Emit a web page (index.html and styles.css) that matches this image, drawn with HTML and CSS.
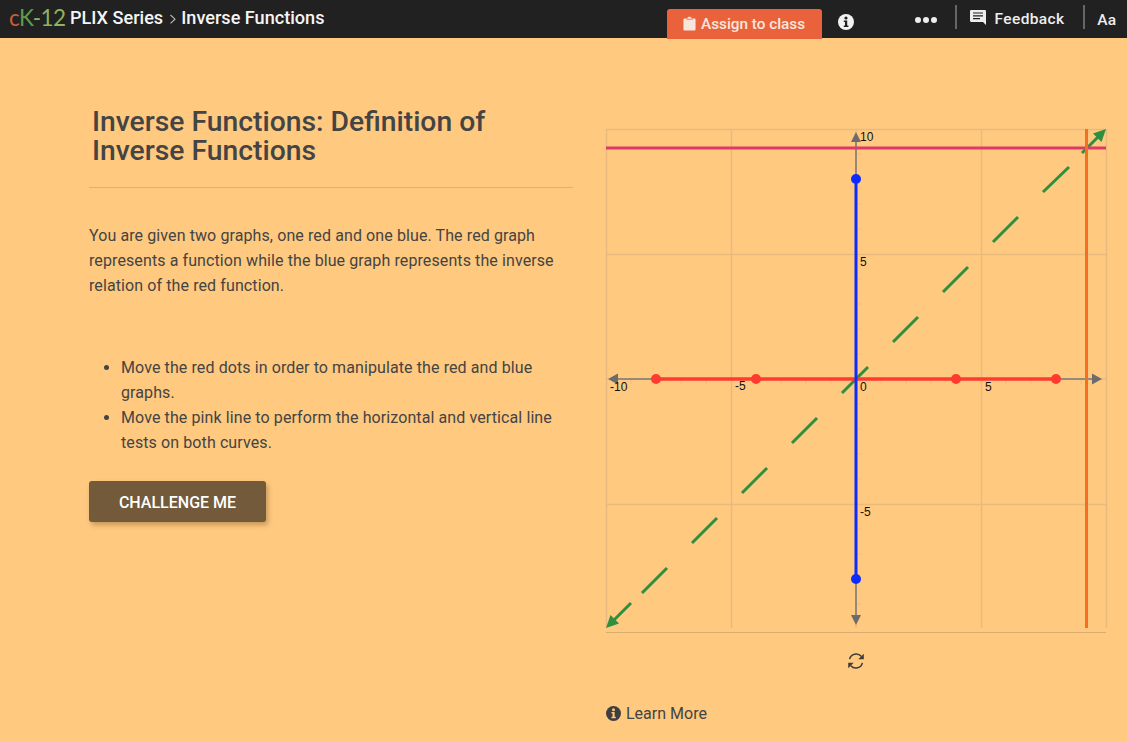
FILE: index.html
```html
<!DOCTYPE html>
<html lang="en">
<head>
<meta charset="utf-8">
<title>Inverse Functions</title>
<link rel="stylesheet" href="styles.css">
</head>
<body>
<header class="topbar">
  <div class="brand">
    <span class="logo"><span class="logo-c">c</span><span class="logo-k">K</span><span class="logo-n">-12</span></span>
    <span class="crumb">PLIX Series</span>
    <svg class="chev" width="8" height="12" viewBox="0 0 8 12"><path d="M1.500 2l4.500 4.200-4.500 4.200" fill="none" stroke="#bbb" stroke-width="1.100"/></svg>
    <span class="crumb">Inverse Functions</span>
  </div>
  <div class="tools">
    <button class="assign">
      <svg width="13" height="15" viewBox="0 0 14 16"><path d="M1.500 2.500H4.600C4.900 1.300 5.800.6 7 .6s2.100.7 2.400 1.900h3.100c.6 0 1 .4 1 1v11c0 .6-.4 1-1 1h-11c-.6 0-1-.4-1-1v-11c0-.6.4-1 1-1z" fill="#f6e6dc"/><path d="M3.500 3.400h7" stroke="#ea623c" stroke-width=".8"/></svg>
      Assign to class
    </button>
    <svg class="info" width="16" height="16" viewBox="0 0 16 16"><circle cx="8" cy="8" r="8" fill="#f2f2f2"/><circle cx="8" cy="4" r="1.600" fill="#212121"/><path d="M5.800 6.500h3.400v5h1.200v1.600H5.800v-1.600H7v-3.400H5.800z" fill="#212121"/></svg>
    <span class="dots"><i></i><i></i><i></i></span>
    <span class="sep"></span>
    <svg class="fb-icon" width="16" height="16" viewBox="0 0 16 16"><path d="M1.200 0h13.600c.7 0 1.200.5 1.200 1.200V15l-3-3H1.200C.5 12 0 11.500 0 10.800V1.200C0 .5.500 0 1.200 0z" fill="#eee"/><path d="M3 3h10M3 5.800h10M3 8.600h7" stroke="#212121" stroke-width="1.200"/></svg>
    <span class="feedback">Feedback</span>
    <span class="sep sep-b"></span>
    <span class="aa">Aa</span>
  </div>
</header>

<main class="page">
  <section class="intro">
    <h1 class="title">Inverse Functions: Definition of Inverse Functions</h1>
    <p class="lead">You are given two graphs, one red and one blue. The red graph represents a function while the blue graph represents the inverse relation of the red function.</p>
    <ul class="steps">
      <li>Move the red dots in order to manipulate the red and blue graphs.</li>
      <li>Move the pink line to perform the horizontal and vertical line tests on both curves.</li>
    </ul>
    <button class="challenge">CHALLENGE ME</button>
  </section>

  <section class="stage">
    <svg class="graph" width="501" height="504" viewBox="0 0 501 504">
      <g class="grid">
        <path d="M.5 0V499M125.500 0V499M375.500 0V499M500.500 0V499M0 .5H500M0 125.500H500M0 375.500H500"/>
        <path class="minor" d="M250 0V499M0 250H500"/>
      </g>
      <path class="ticks" d="M25 250v5M50 250v5M75 250v5M100 250v5M150 250v5M175 250v5M200 250v5M225 250v5M275 250v5M300 250v5M325 250v5M350 250v5M400 250v5M425 250v5M450 250v5M475 250v5M250 25h5M250 50h5M250 75h5M250 100h5M250 150h5M250 175h5M250 200h5M250 225h5M250 275h5M250 300h5M250 325h5M250 350h5M250 400h5M250 425h5M250 450h5M250 475h5"/>
      <path class="axis" d="M10 250H490M250 10V488"/>
      <path class="arrowhead" d="M2 250l10-5.500v11zM496 250l-10-5.500v11zM250 3l5 10h-10zM250 496l-5-10h10z"/>
      <text class="num" x="254" y="12">10</text>
      <text class="num" x="254" y="137">5</text>
      <text class="num" x="254" y="387">-5</text>
      <text class="num" x="4" y="262">-10</text>
      <text class="num" x="129" y="261">-5</text>
      <text class="num" x="254" y="262">0</text>
      <text class="num" x="379" y="262">5</text>
      <path class="green" d="M8 491L25 474M36 464L61 439M86 414L111 389M136 364L161 339M186 314L211 289M236 264L262 238M287 213L312 188M337 163L362 138M387 113L412 88M437 63L463 38M476 24L493 7"/>
      <path class="green-head" d="M0 499l4.500-13 8.500 8.500zM500 0l-4.500 13-8.500-8.500z"/>
      <path class="red" d="M50 250H450"/>
      <path class="blue" d="M250 50V450"/>
      <circle class="red-dot" cx="50" cy="250" r="5"/>
      <circle class="red-dot" cx="150" cy="250" r="5"/>
      <circle class="red-dot" cx="350" cy="250" r="5"/>
      <circle class="red-dot" cx="450" cy="250" r="5"/>
      <circle class="blue-dot" cx="250" cy="50" r="5"/>
      <circle class="blue-dot" cx="250" cy="450" r="5"/>
      <path class="pink" d="M0 19H500"/>
      <path class="orange" d="M480.500 0V499"/>
    </svg>
    <div class="rule"></div>
    <div class="reset">
      <svg width="18" height="18" viewBox="0 0 18 18"><path d="M2.600 7.200A6.700 6.700 0 0 1 14.200 4.300M15.400 10.800A6.700 6.700 0 0 1 3.800 13.700" fill="none" stroke="#3d3d3d" stroke-width="1.500"/><path d="M16.800 1.700v5.500h-5.500zM1.200 16.300v-5.500h5.500z" fill="#3d3d3d"/></svg>
    </div>
    <div class="learn">
      <svg width="15" height="15" viewBox="0 0 16 16"><circle cx="8" cy="8" r="8" fill="#3f3f3f"/><circle cx="8" cy="4" r="1.600" fill="#ffc980"/><path d="M5.800 6.500h3.400v5h1.200v1.600H5.800v-1.600H7v-3.400H5.800z" fill="#ffc980"/></svg>
      <span>Learn More</span>
    </div>
  </section>
</main>
</body>
</html>
```
FILE: styles.css
```css
* { box-sizing: border-box; }
html, body { margin: 0; height: 100%; }
body {
  background: #ffc980;
  font-family: Roboto, "Liberation Sans", sans-serif;
  color: #444;
  overflow: hidden;
}
.topbar {
  height: 38px;
  background: #212121;
  display: flex;
  justify-content: space-between;
  color: #f5f5f5;
}
.brand {
  display: flex;
  align-items: center;
  height: 35px;
  padding-left: 9px;
}
.logo {
  font-family: Lato, Roboto, sans-serif;
  font-size: 22.500px;
  font-weight: 400;
  letter-spacing: -0.6px;
  line-height: 36px;
  width: 61px;
  white-space: nowrap;
}
.logo-c { color: #c9603a; }
.logo-k { color: #5f9c4c; }
.logo-n { color: #8fb35f; }
.crumb { font-size: 18.100px; font-weight: 500; color: #f5f5f5; white-space: nowrap; }
.chev { margin: 2px 4px 0 6px; }
.tools { display: flex; align-items: flex-start; padding-right: 11px; }
.assign {
  margin-top: 9px;
  width: 155px;
  height: 30px;
  background: #ea623c;
  border: 0;
  border-radius: 3px 3px 0 0;
  color: #f6e6dc;
  font: 500 15.300px Roboto, sans-serif;
  display: flex;
  align-items: center;
  justify-content: center;
  gap: 5px;
  padding: 0 0 1px;
}
.info { margin: 14px 0 0 16px; }
.dots { display: flex; gap: 2px; margin: 17px 0 0 61px; }
.dots i { width: 6px; height: 6px; border-radius: 50%; background: #eee; }
.sep { width: 2px; height: 24px; background: #666; margin: 5px 0 0 18px; }
.fb-icon { margin: 10px 0 0 13px; }
.feedback { font-size: 15.500px; font-weight: 500; margin: 10px 0 0 9px; letter-spacing: .35px; color: #eee; }
.sep-b { margin-left: 19px; }
.aa { font-size: 15.500px; font-weight: 500; margin: 11px 0 0 12px; color: #eee; }

.page { display: flex; align-items: flex-start; padding-left: 89px; }
.intro { width: 484px; padding-top: 69px; }
.title {
  margin: 0;
  padding: 0 60px 22px 3px;
  font-size: 28.300px;
  line-height: 29px;
  font-weight: 500;
  color: #444;
  border-bottom: 1px solid #e3ae70;
}
.lead { margin: 35px 0 0; font-size: 16px; line-height: 25px; letter-spacing: .1px; }
.steps { margin: 57px 0 0; padding: 0 20px 0 32px; font-size: 16px; line-height: 25px; letter-spacing: .1px; }
.challenge {
  display: block;
  margin-top: 26px;
  width: 177px;
  height: 41px;
  background: #735a3a;
  color: #fff;
  border: 0;
  border-radius: 3px;
  padding: 2px 0 0;
  font: 500 16px Roboto, sans-serif;
  box-shadow: 2px 3px 5px rgba(90, 60, 20, .35);
}
.stage { margin: 91px 0 0 33px; width: 501px; }
.graph { display: block; overflow: visible; }
.grid path { fill: none; stroke: #e9ba7e; stroke-width: 1.500; }
.ticks { fill: none; stroke: #edbd85; stroke-width: 1; }
.axis { fill: none; stroke: #96897a; stroke-width: 2; }
.arrowhead { fill: #6c6c6c; }
.num { font: 12px "Liberation Sans", Arial, sans-serif; fill: #111; }
.green { fill: none; stroke: #2f8f3f; stroke-width: 3; }
.green-head { fill: #2f8f3f; }
.red { fill: none; stroke: #ff3a2f; stroke-width: 3.500; }
.blue { fill: none; stroke: #0b2bff; stroke-width: 3; }
.red-dot { fill: #ff3a2f; }
.blue-dot { fill: #0b2bff; }
.pink { fill: none; stroke: #dc3a68; stroke-width: 3; }
.orange { fill: none; stroke: #f2701f; stroke-width: 3; }
.rule { height: 1px; background: #d9ac72; margin-top: -1px; width: 500px; }
.reset { display: flex; justify-content: center; margin-top: 19px; width: 500px; }
.reset svg { display: block; }
.learn { display: flex; align-items: center; gap: 5px; margin-top: 34px; font-size: 16px; color: #444; }
```
